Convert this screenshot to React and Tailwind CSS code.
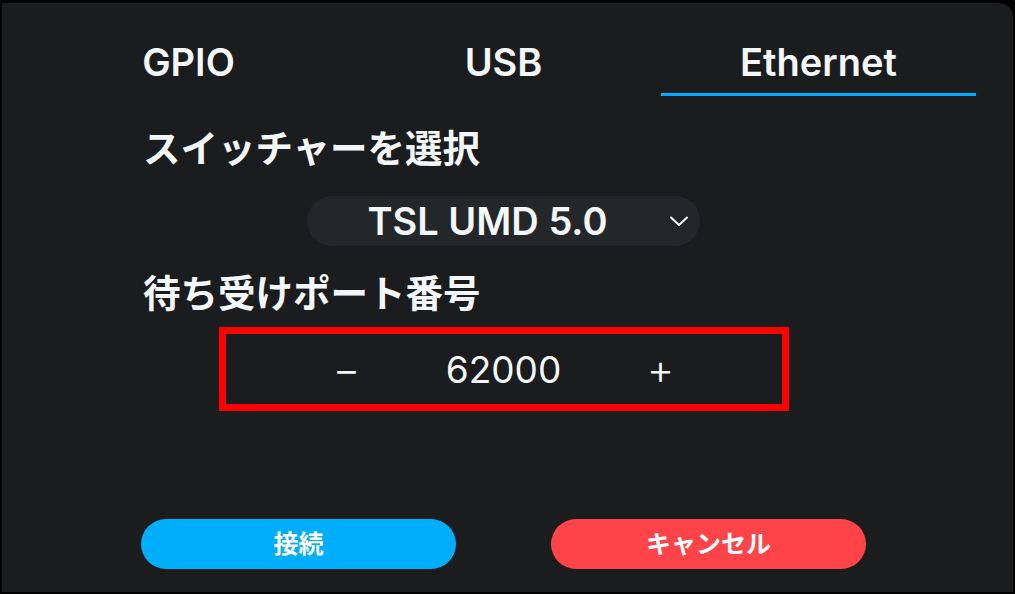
import { useState } from 'react'

const TABS = ['GPIO', 'USB', 'Ethernet']

const font = { fontFamily: 'Inter, "Noto Sans CJK JP", sans-serif' }

export default function App() {
  const [tab, setTab] = useState('Ethernet')
  const [port, setPort] = useState(62000)

  return (
    <div
      className="w-[1015px] h-[594px] bg-black pt-[3px] pl-[2px] pb-[2px] pr-[2px] overflow-hidden"
      style={font}
    >
      <div className="h-full w-full bg-[#1b1c1e] rounded-tr-[14px] flex flex-col items-center pr-[8px] text-[#f4f7fa]">
        {/* Tabs */}
        <div className="flex w-[945px]">
          {TABS.map((t) => (
            <button
              key={t}
              type="button"
              onClick={() => setTab(t)}
              className={
                'w-[315px] pt-[40px] pb-[12px] border-b-[3px] text-[38px] leading-none font-semibold ' +
                (tab === t ? 'border-[#00adfe]' : 'border-transparent')
              }
            >
              {t}
            </button>
          ))}
        </div>

        {/* Body */}
        <div className="w-[725px] flex flex-col">
          <div className="mt-[34px] text-[37.5px] leading-none font-bold pl-[2px]">
            スイッチャーを選択
          </div>

          <div className="mt-[28px] flex justify-center">
            <button
              type="button"
              className="w-[393px] h-[50px] rounded-full bg-[#24272a] flex items-center pr-[10px]"
            >
              <span className="flex-1 text-center text-[38px] leading-none font-semibold">
                TSL UMD 5.0
              </span>
              <svg width="22" height="22" viewBox="0 0 22 22" fill="none" stroke="#f4f7fa" strokeWidth="2" strokeLinecap="round" strokeLinejoin="round">
                <polyline points="3 7.5 11 15 19 7.5" />
              </svg>
            </button>
          </div>

          <div className="mt-[29px] text-[37.5px] leading-none font-bold pl-[2px]">
            待ち受けポート番号
          </div>

          <div className="mt-[15px] flex justify-center">
            <div className="w-[570px] h-[84px] border-[7px] border-[#ff0000] flex items-center justify-center">
              <div className="grid grid-cols-3 w-[471px] items-center text-center">
                <button type="button" onClick={() => setPort((p) => p - 1)} className="text-[42px] leading-none font-light">
                  −
                </button>
                <span className="text-[37px] leading-none">{port}</span>
                <button type="button" onClick={() => setPort((p) => p + 1)} className="text-[42px] leading-none font-light">
                  +
                </button>
              </div>
            </div>
          </div>

          <div className="mt-[108px] flex justify-between">
            <button type="button" className="w-[315px] h-[50px] rounded-full bg-[#00aefe] text-white text-[25px] font-bold leading-none">
              接続
            </button>
            <button type="button" className="w-[315px] h-[50px] rounded-full bg-[#ff4449] text-white text-[25px] font-bold leading-none">
              キャンセル
            </button>
          </div>
        </div>
      </div>
    </div>
  )
}
